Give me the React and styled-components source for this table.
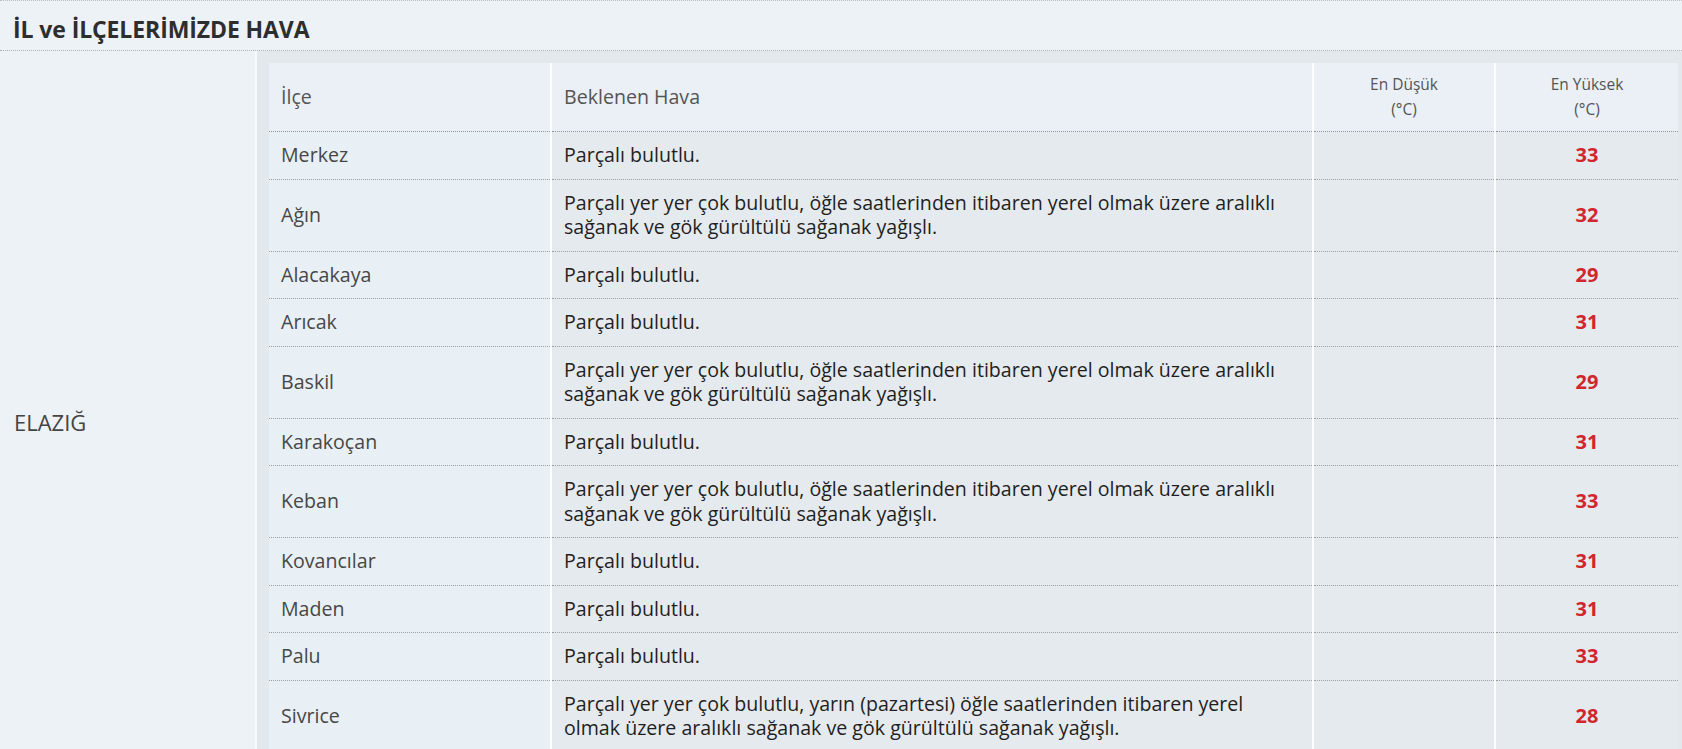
import React from "react";
import styled, { createGlobalStyle } from "styled-components";

const GlobalStyle = createGlobalStyle`
  html, body {
    margin: 0;
    padding: 0;
    background: #edf2f6;
    font-family: "Open Sans", "Liberation Sans", sans-serif;
  }
`;

const Page = styled.div`
  width: 1682px;
  background: #edf2f6;
  color: #333;
`;

const TitleBar = styled.div`
  border-top: 1px dotted #b9bec2;
  border-bottom: 1px dotted #a9aeb2;
  padding: 7px 13px 0;
  height: 42px;
  display: flex;
  align-items: center;
`;

const Title = styled.h2`
  margin: 0;
  font-size: 23px;
  font-weight: 700;
  color: #2e2e2e;
  letter-spacing: -0.1px;
`;

const Body = styled.div`
  display: flex;
  align-items: stretch;
`;

const Province = styled.div`
  width: 241px;
  flex: none;
  padding: 26px 0 0 14px;
  border-right: 2px solid #f7fafc;
  display: flex;
  align-items: center;
  font-size: 22px;
  color: #444;
`;

const Districts = styled.div`
  flex: 1;
  background: #e3e8ec;
  padding: 12px 4px 14px 12px;
`;

const Table = styled.table`
  width: 100%;
  border-collapse: collapse;
  table-layout: fixed;
`;

const HeadCell = styled.th`
  background: #eaf0f5;
  font-weight: 400;
  text-align: ${(p) => (p.$center ? "center" : "left")};
  font-size: ${(p) => (p.$small ? "15.5px" : "19.6px")};
  line-height: ${(p) => (p.$small ? "25px" : "24px")};
  color: #555;
  padding: ${(p) => (p.$small ? "9px 8px 9px" : "22px 12px")};
  border-bottom: 1px dotted #8f9499;
  border-left: ${(p) => (p.$first ? "none" : "2px solid #fbfdfe")};
  vertical-align: middle;
  white-space: nowrap;
`;

const Cell = styled.td`
  background: ${(p) => p.$bg};
  font-size: 19.6px;
  line-height: 24.5px;
  color: ${(p) => (p.$dark ? "#1f1f1f" : "#474747")};
  padding: 11px 12px 11px;
  border-bottom: 1px dotted #9a9fa4;
  border-left: ${(p) => (p.$first ? "none" : "2px solid #fbfdfe")};
  vertical-align: middle;
  white-space: nowrap;
`;

const Temp = styled(Cell)`
  text-align: center;
  font-size: 20px;
  font-weight: 700;
  color: #d1262d;
`;

const rows = [
  { name: "Merkez", text: "Parçalı bulutlu.", max: 33 },
  {
    name: "Ağın",
    text: "Parçalı yer yer çok bulutlu, öğle saatlerinden itibaren yerel olmak üzere aralıklı\nsağanak ve gök gürültülü sağanak yağışlı.",
    max: 32,
  },
  { name: "Alacakaya", text: "Parçalı bulutlu.", max: 29 },
  { name: "Arıcak", text: "Parçalı bulutlu.", max: 31 },
  {
    name: "Baskil",
    text: "Parçalı yer yer çok bulutlu, öğle saatlerinden itibaren yerel olmak üzere aralıklı\nsağanak ve gök gürültülü sağanak yağışlı.",
    max: 29,
  },
  { name: "Karakoçan", text: "Parçalı bulutlu.", max: 31 },
  {
    name: "Keban",
    text: "Parçalı yer yer çok bulutlu, öğle saatlerinden itibaren yerel olmak üzere aralıklı\nsağanak ve gök gürültülü sağanak yağışlı.",
    max: 33,
  },
  { name: "Kovancılar", text: "Parçalı bulutlu.", max: 31 },
  { name: "Maden", text: "Parçalı bulutlu.", max: 31 },
  { name: "Palu", text: "Parçalı bulutlu.", max: 33 },
  {
    name: "Sivrice",
    text: "Parçalı yer yer çok bulutlu, yarın (pazartesi) öğle saatlerinden itibaren yerel\nolmak üzere aralıklı sağanak ve gök gürültülü sağanak yağışlı.",
    max: 28,
  },
];

const Lines = ({ text }) =>
  text.split("\n").map((line, i) => (
    <React.Fragment key={i}>
      {i > 0 && <br />}
      {line}
    </React.Fragment>
  ));

export default function App() {
  return (
    <Page>
      <GlobalStyle />
      <TitleBar>
        <Title>İL ve İLÇELERİMİZDE HAVA</Title>
      </TitleBar>
      <Body>
        <Province>ELAZIĞ</Province>
        <Districts>
          <Table>
            <colgroup>
              <col style={{ width: 282 }} />
              <col style={{ width: 762 }} />
              <col style={{ width: 182 }} />
              <col />
            </colgroup>
            <thead>
              <tr>
                <HeadCell $first>İlçe</HeadCell>
                <HeadCell>Beklenen Hava</HeadCell>
                <HeadCell $small $center>
                  En Düşük
                  <br />
                  (°C)
                </HeadCell>
                <HeadCell $small $center>
                  En Yüksek
                  <br />
                  (°C)
                </HeadCell>
              </tr>
            </thead>
            <tbody>
              {rows.map((r) => (
                <tr key={r.name}>
                  <Cell $first $bg="#e9f0f5">
                    {r.name}
                  </Cell>
                  <Cell $dark $bg="#e5eaee">
                    <Lines text={r.text} />
                  </Cell>
                  <Cell $bg="#e5eaee" />
                  <Temp $bg="#e5eaee">{r.max}</Temp>
                </tr>
              ))}
            </tbody>
          </Table>
        </Districts>
      </Body>
    </Page>
  );
}
